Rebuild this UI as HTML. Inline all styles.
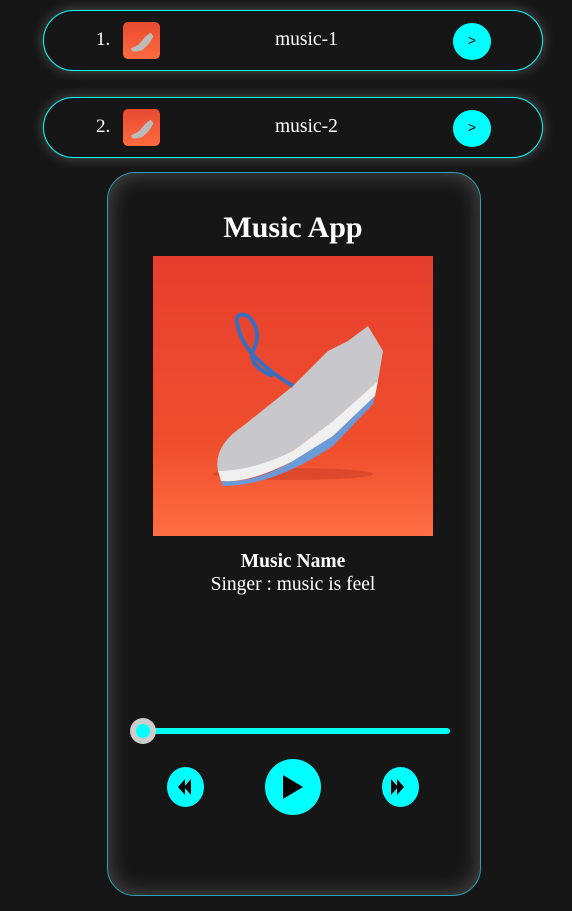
<!DOCTYPE html>
<html><head><style>
body{margin:0;width:572px;height:911px;background:#161616;font-family:"Liberation Serif",serif;color:#fff;position:relative;overflow:hidden}
.item{position:absolute;left:43px;width:498px;height:59px;border:1px solid #0ff;border-radius:31px;box-shadow:0 0 12px rgba(200,200,200,.35);background:#161616}
.num{position:absolute;left:52px;top:18px;font-size:19px}
.thumb{position:absolute;left:79px;top:11px;width:37px;height:37px;border-radius:5px;background:linear-gradient(#e84a30,#ff6a40);overflow:hidden}
.name{position:absolute;left:231px;top:18px;font-size:19.5px}
.go{position:absolute;left:409px;top:12px;width:38px;height:37px;border-radius:50%;background:#0ff;color:#000;font-family:"Liberation Sans",sans-serif;font-size:14px;text-align:center;line-height:34px}
.card{position:absolute;left:107px;top:172px;width:372px;height:722px;border:1px solid #2aa0b5;border-radius:28px;box-shadow:inset 0 0 22px rgba(190,190,190,.35);background:#161616}
.circ{position:absolute;border-radius:50%;background:#0ff}
</style></head><body>
<div class="item" style="top:10px"><div class="num">1.</div><div class="thumb"><svg width="37" height="37" viewBox="0 0 280 280"><path d="M60 200 L120 170 L170 110 L210 80 L230 110 L200 160 L150 210 Q100 230 70 220Z" fill="#bbb"/></svg></div><div class="name">music-1</div><div class="go">&gt;</div></div>
<div class="item" style="top:97px"><div class="num">2.</div><div class="thumb"><svg width="37" height="37" viewBox="0 0 280 280"><path d="M60 200 L120 170 L170 110 L210 80 L230 110 L200 160 L150 210 Q100 230 70 220Z" fill="#bbb"/></svg></div><div class="name">music-2</div><div class="go">&gt;</div></div>
<div class="card"></div>
<div style="position:absolute;top:211px;width:572px;left:7px;text-align:center;font-size:30px;font-weight:bold">Music App</div>
<svg style="position:absolute;left:153px;top:256px" width="280" height="280" viewBox="0 0 280 280">
<defs><linearGradient id="g" x1="0" y1="0" x2="0" y2="1"><stop offset="0" stop-color="#e63e2e"/><stop offset=".7" stop-color="#f0502e"/><stop offset="1" stop-color="#ff6e44"/></linearGradient></defs>
<rect width="280" height="280" fill="url(#g)"/>
<ellipse cx="140" cy="218" rx="80" ry="6" fill="#c83a24" opacity=".5"/>
<path d="M65 215 Q60 190 90 170 L140 130 L175 95 L195 85 L215 70 L230 95 L225 125 L180 165 L140 195 Q100 220 70 222Z" fill="#c8c8cc"/>
<path d="M65 215 Q100 215 140 195 L180 165 L225 125 L222 140 L180 180 L140 205 Q95 228 68 225Z" fill="#f0f0f0"/>
<path d="M68 225 Q100 228 140 205 L180 180 L222 140 L220 148 L180 190 Q120 230 70 230Z" fill="#6a9ad8"/>
<path d="M140 130 Q90 100 85 70 Q80 55 95 60 Q110 75 100 95 Q95 110 120 120" stroke="#3a6fc0" stroke-width="4" fill="none"/>
</svg>
<div style="position:absolute;top:550px;width:572px;left:7px;text-align:center;font-size:19.5px;line-height:23px"><b>Music Name</b><br>Singer : music is feel</div>
<div style="position:absolute;left:140px;top:728px;width:310px;height:6px;border-radius:3px;background:#0ff"></div>
<div class="circ" style="left:130px;top:718px;width:26px;height:26px;background:#ccc"></div>
<div class="circ" style="left:136px;top:724px;width:14px;height:14px"></div>
<div class="circ" style="left:167px;top:767px;width:37px;height:40px"><svg width="37" height="40"><path d="M11 20 L18 12 V28Z M17 20 L24 12 V28Z" fill="#000"/></svg></div>
<div class="circ" style="left:265px;top:759px;width:56px;height:56px"><svg width="56" height="56"><path d="M18 16 L38 28 L18 40Z" fill="#000"/></svg></div>
<div class="circ" style="left:382px;top:767px;width:37px;height:40px"><svg width="37" height="40"><path d="M9 12 L16 20 L9 28Z M15 12 L22 20 L15 28Z" fill="#000"/></svg></div>
</body></html>
